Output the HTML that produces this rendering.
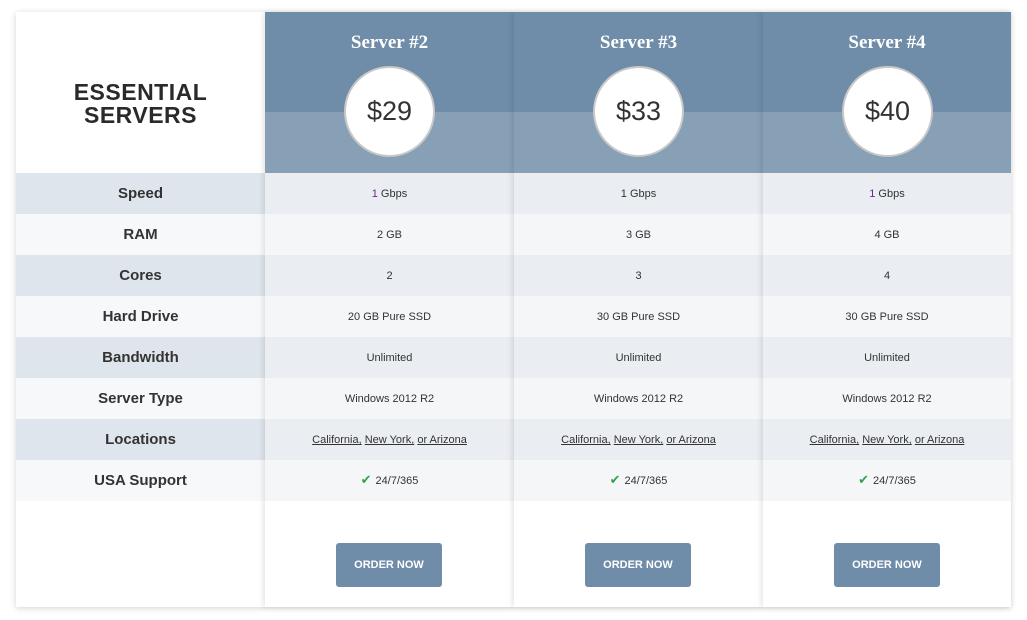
<!DOCTYPE html>
<html><head><meta charset="utf-8"><style>
*{margin:0;padding:0;box-sizing:border-box}
body{width:1027px;height:620px;background:#fff;position:relative;overflow:hidden;font-family:"Liberation Sans",sans-serif;color:#333}
.wrap{position:absolute;left:16px;top:12px;width:995px;height:595px;background:#fff;box-shadow:0 1px 6px rgba(0,0,0,.18)}
.col{position:absolute;top:0;height:595px;background:#fff}
.lab{left:0;width:249px}
.c{width:249px;box-shadow:-2px 0 5px rgba(0,0,0,.1)}
.head{position:absolute;left:0;top:0;width:100%;height:161px}
.hd1{position:absolute;left:0;top:0;width:100%;height:100px;background:#6f8ca8}
.hd2{position:absolute;left:0;top:100px;width:100%;height:61px;background:#87a0b6}
.title{position:absolute;top:20px;width:100%;text-align:center;color:#fff;font-family:"Liberation Serif",serif;font-size:19px;font-weight:bold}
.circ{position:absolute;left:79px;top:54px;width:91px;height:91px;border-radius:50%;background:#fff;border:2px solid #c8c8c8;text-align:center;line-height:87px;font-size:27px;color:#333}
.row{position:absolute;left:0;width:100%;height:41px;line-height:43px;text-align:center;font-size:11px;color:#333}
.lab .row{font-size:15px;font-weight:bold;color:#333;line-height:42px}
.lab .o{background:#dfe5ec}.lab .e{background:#f6f8fa}
.c .o{background:#eaedf2}.c .e{background:#f5f6f8}
.ess{position:absolute;top:69px;width:100%;text-align:center;font-weight:bold;font-size:23px;line-height:23px;color:#2a2a2a;letter-spacing:.5px}
.btn{position:absolute;left:71px;top:531px;width:106px;height:44px;background:#6f8ca8;border-radius:3px;color:#fff;font-weight:bold;font-size:11px;line-height:44px;text-align:center}
u{text-decoration:underline}
.ck{color:#2ea44f;font-size:13px;margin-right:4px}
.e.s{line-height:39px}
</style></head><body>
<div class="wrap">
<div class="col lab">
<div class="ess">ESSENTIAL<br>SERVERS</div>
<div class="row o" style="top:161px">Speed</div>
<div class="row e" style="top:202px">RAM</div>
<div class="row o" style="top:243px">Cores</div>
<div class="row e" style="top:284px">Hard Drive</div>
<div class="row o" style="top:325px">Bandwidth</div>
<div class="row e" style="top:366px">Server Type</div>
<div class="row o" style="top:407px">Locations</div>
<div class="row e" style="top:448px">USA Support</div>
</div>

<div class="col c" style="left:249px">
<div class="head"><div class="hd1"></div><div class="hd2"></div><div class="title">Server #2</div><div class="circ">$29</div></div>
<div class="row o" style="top:161px"><span style="color:#6a2c8a">1</span> Gbps</div>
<div class="row e" style="top:202px">2 GB</div>
<div class="row o" style="top:243px">2</div>
<div class="row e" style="top:284px">20 GB Pure SSD</div>
<div class="row o" style="top:325px">Unlimited</div>
<div class="row e" style="top:366px">Windows 2012 R2</div>
<div class="row o" style="top:407px"><u>California,</u> <u>New York,</u> <u>or Arizona</u></div>
<div class="row e s" style="top:448px"><span class="ck">✔</span>24/7/365</div>
<div class="btn">ORDER NOW</div>
</div>

<div class="col c" style="left:498px">
<div class="head"><div class="hd1"></div><div class="hd2"></div><div class="title">Server #3</div><div class="circ">$33</div></div>
<div class="row o" style="top:161px">1 Gbps</div>
<div class="row e" style="top:202px">3 GB</div>
<div class="row o" style="top:243px">3</div>
<div class="row e" style="top:284px">30 GB Pure SSD</div>
<div class="row o" style="top:325px">Unlimited</div>
<div class="row e" style="top:366px">Windows 2012 R2</div>
<div class="row o" style="top:407px"><u>California,</u> <u>New York,</u> <u>or Arizona</u></div>
<div class="row e s" style="top:448px"><span class="ck">✔</span>24/7/365</div>
<div class="btn">ORDER NOW</div>
</div>

<div class="col c" style="left:747px;width:248px">
<div class="head"><div class="hd1"></div><div class="hd2"></div><div class="title">Server #4</div><div class="circ">$40</div></div>
<div class="row o" style="top:161px"><span style="color:#6a2c8a">1</span> Gbps</div>
<div class="row e" style="top:202px">4 GB</div>
<div class="row o" style="top:243px">4</div>
<div class="row e" style="top:284px">30 GB Pure SSD</div>
<div class="row o" style="top:325px">Unlimited</div>
<div class="row e" style="top:366px">Windows 2012 R2</div>
<div class="row o" style="top:407px"><u>California,</u> <u>New York,</u> <u>or Arizona</u></div>
<div class="row e s" style="top:448px"><span class="ck">✔</span>24/7/365</div>
<div class="btn">ORDER NOW</div>
</div>
</div>
</body></html>
